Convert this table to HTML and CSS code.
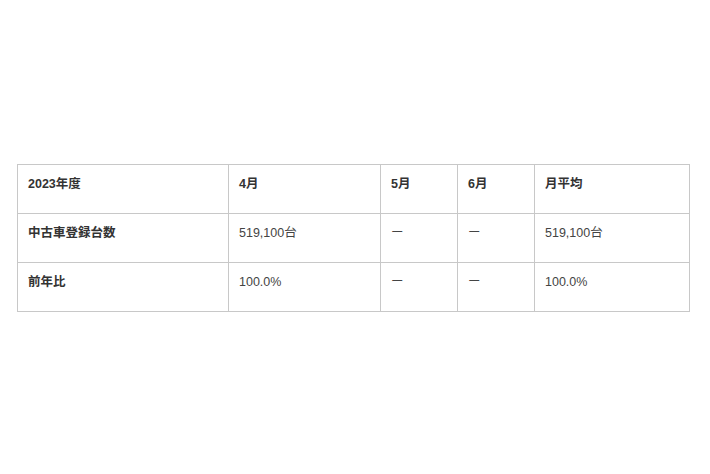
FILE: index.html
```html
<!DOCTYPE html>
<html lang="ja">
<head>
<meta charset="utf-8">
<link rel="stylesheet" href="styles.css">
</head>
<body>
<div class="page">
<table class="data">
  <colgroup>
    <col class="c1"><col class="c2"><col class="c3"><col class="c4"><col class="c5">
  </colgroup>
  <thead>
    <tr><th>2023年度</th><th>4月</th><th>5月</th><th>6月</th><th>月平均</th></tr>
  </thead>
  <tbody>
    <tr><th>中古車登録台数</th><td>519,100台</td><td>ー</td><td>ー</td><td>519,100台</td></tr>
    <tr><th>前年比</th><td>100.0%</td><td>ー</td><td>ー</td><td>100.0%</td></tr>
  </tbody>
</table>
</div>
</body>
</html>
```
FILE: styles.css
```css
html, body {
  margin: 0;
  padding: 0;
  background: #fff;
}
.page {
  padding: 164px 21px 0 17px;
}
.data {
  width: 672px;
  border-collapse: collapse;
  table-layout: fixed;
  font-family: "Liberation Sans", "Noto Sans CJK JP", sans-serif;
  font-size: 12.5px;
  line-height: 18px;
  color: #444;
}
.c1 { width: 211px; }
.c2 { width: 152px; }
.c3 { width: 77px; }
.c4 { width: 77px; }
.c5 { width: 155px; }
.data th, .data td {
  border: 1px solid #c8c8c8;
  padding: 10px 10px 20px;
  text-align: left;
  vertical-align: top;
  height: 18px;
}
.data th {
  font-weight: bold;
  color: #333;
}
.data td {
  font-weight: normal;
}
```
